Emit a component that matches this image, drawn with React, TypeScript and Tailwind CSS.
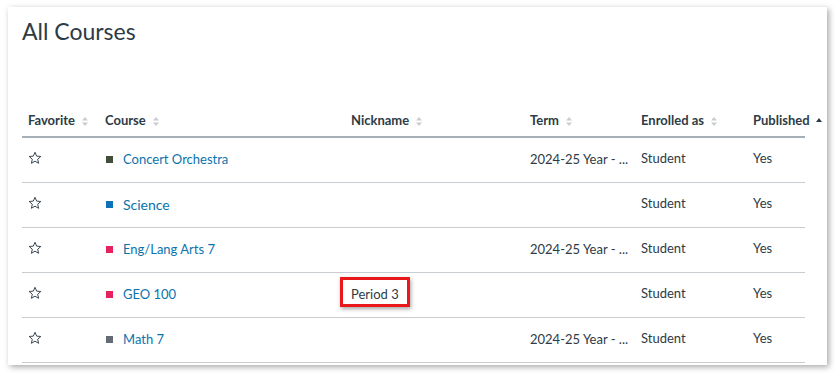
import React from "react";

type Course = {
  name: string;
  color: string;
  nickname?: string;
  term?: string;
};

const courses: Course[] = [
  { name: "Concert Orchestra", color: "#434d39", term: "2024-25 Year - ..." },
  { name: "Science", color: "#0b72b7" },
  { name: "Eng/Lang Arts 7", color: "#e5215f", term: "2024-25 Year - ..." },
  { name: "GEO 100", color: "#e5215f", nickname: "Period 3" },
  { name: "Math 7", color: "#656b74", term: "2024-25 Year - ..." },
];

const SortIcon = () => (
  <svg width="6" height="9" viewBox="0 0 6 9" className="ml-[7px] inline-block">
    <path d="M3 0 L6 3.6 H0 Z" fill="#c7cdd1" />
    <path d="M3 9 L6 5.4 H0 Z" fill="#c7cdd1" />
  </svg>
);

const SortedUp = () => (
  <svg width="6" height="5" viewBox="0 0 6 5" className="ml-[6px] inline-block mb-[3px]">
    <path d="M3 0 L6 4 H0 Z" fill="#2d3b45" />
  </svg>
);

const Star = () => (
  <svg width="14" height="14" viewBox="0 0 24 24" className="block">
    <path
      d="M12 2.2l2.9 6.6 7.1.6-5.4 4.7 1.6 7-6.2-3.7-6.2 3.7 1.6-7L2 9.4l7.1-.6z"
      fill="none"
      stroke="#2d3b45"
      strokeWidth="1.6"
      strokeLinejoin="round"
    />
  </svg>
);

const headers = [
  { label: "Favorite", w: "w-[77px]" },
  { label: "Course", w: "w-[246px]" },
  { label: "Nickname", w: "w-[179px]" },
  { label: "Term", w: "w-[111px]" },
  { label: "Enrolled as", w: "w-[112px]" },
  { label: "Published", w: "w-[58px]", sorted: true },
];

export default function App() {
  return (
    <div className="min-h-[373px] w-[836px] bg-white pl-[8px] pt-[7px] font-['Lato','Liberation_Sans',sans-serif] text-[#2d3b45]">
      <div className="h-[358px] w-[819px] bg-white shadow-[2px_2px_6px_rgba(0,0,0,0.35)] px-[14px] pt-[9px]">
        <h1 className="text-[23px] leading-[30px] font-normal">All Courses</h1>
        <table className="mt-[61px] table-fixed border-collapse w-[783px] text-[13px]">
          <thead>
            <tr className="border-b-2 border-[#a5afb5]">
              {headers.map((h) => (
                <th
                  key={h.label}
                  className={`${h.w} h-[30px] pl-[6px] text-left font-bold whitespace-nowrap align-top pt-[4px]`}
                >
                  {h.label}
                  {h.sorted ? <SortedUp /> : <SortIcon />}
                </th>
              ))}
            </tr>
          </thead>
          <tbody>
            {courses.map((c) => (
              <tr key={c.name} className="h-[45px] border-b border-[#c7cdd1]">
                <td className="pl-[6px]">
                  <div className="-mt-[3px]">
                    <Star />
                  </div>
                </td>
                <td className="pl-[7px]">
                  <div className="flex items-center gap-[10px]">
                    <span className="w-[7px] h-[7px]" style={{ backgroundColor: c.color }} />
                    <span className={`text-[#0b73ac] ${c.name === "Science" ? "text-[14px]" : ""}`}>
                      {c.name}
                    </span>
                  </div>
                </td>
                <td className="pl-[6px]">
                  {c.nickname && (
                    <span className="relative inline-block">
                      {c.nickname}
                      <span className="absolute -left-[11px] -top-[8px] w-[70px] h-[30px] border-[3px] border-[#e8181b] shadow-[1px_2px_4px_rgba(0,0,0,0.35)]" />
                    </span>
                  )}
                </td>
                <td className="pl-[6px] whitespace-nowrap">{c.term}</td>
                <td className="pl-[6px]">
                  <div className="-mt-[2px]">Student</div>
                </td>
                <td className="pl-[6px]">
                  <div className="-mt-[2px]">Yes</div>
                </td>
              </tr>
            ))}
          </tbody>
        </table>
      </div>
    </div>
  );
}
